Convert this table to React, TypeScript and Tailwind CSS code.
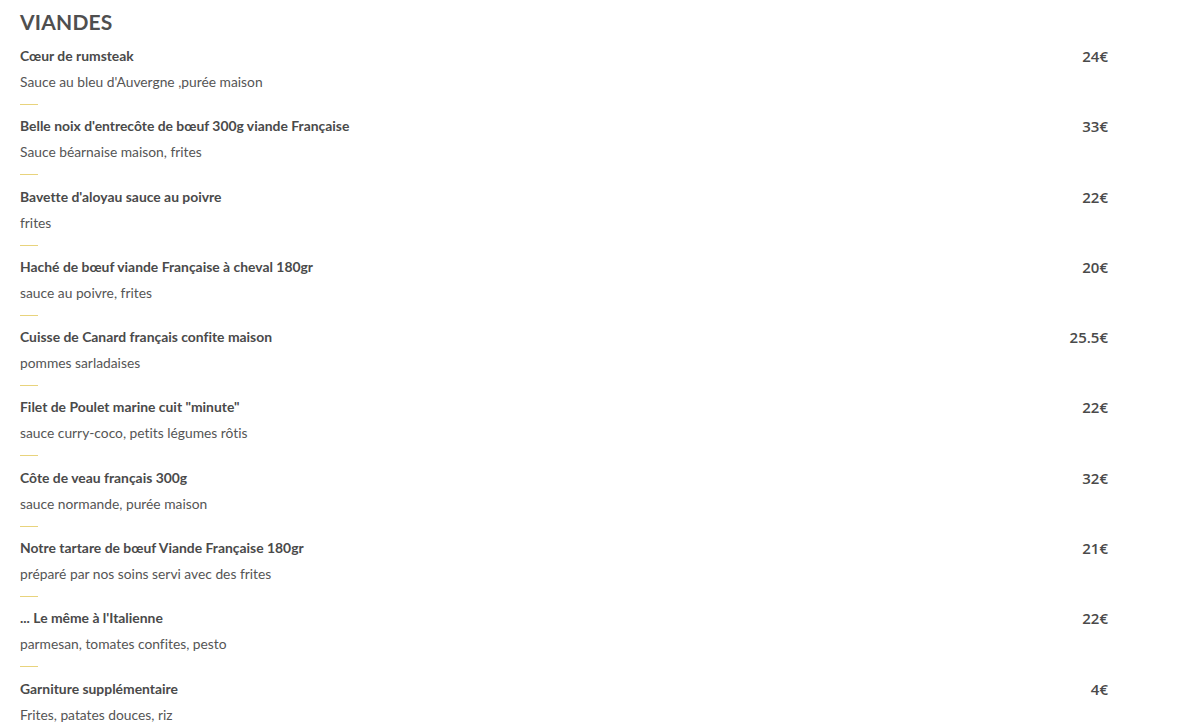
import React from "react"

interface Dish {
    name: string
    desc: string
    price: string
}

const dishes: Dish[] = [
    { name: "Cœur de rumsteak", desc: "Sauce au bleu d'Auvergne ,purée maison", price: "24€" },
    { name: "Belle noix d'entrecôte de bœuf 300g viande Française", desc: "Sauce béarnaise maison, frites", price: "33€" },
    { name: "Bavette d'aloyau sauce au poivre", desc: "frites", price: "22€" },
    { name: "Haché de bœuf viande Française à cheval 180gr", desc: "sauce au poivre, frites", price: "20€" },
    { name: "Cuisse de Canard français confite maison", desc: "pommes sarladaises", price: "25.5€" },
    { name: "Filet de Poulet marine cuit \"minute\"", desc: "sauce curry-coco, petits légumes rôtis", price: "22€" },
    { name: "Côte de veau français 300g", desc: "sauce normande, purée maison", price: "32€" },
    { name: "Notre tartare de bœuf Viande Française 180gr", desc: "préparé par nos soins servi avec des frites", price: "21€" },
    { name: "... Le même à l'Italienne", desc: "parmesan, tomates confites, pesto", price: "22€" },
    { name: "Garniture supplémentaire", desc: "Frites, patates douces, riz", price: "4€" },
]

const MenuItem: React.FunctionComponent<{ dish: Dish; last: boolean }> = ({ dish, last }) => {
    return (
        <div className="flex flex-col">
            <div className="flex flex-row justify-between items-center h-[20px]">
                <span className="text-[13.9px] leading-[20px] font-bold text-[#4a4a4a]">{dish.name}</span>
                <span className="text-[15px] leading-[20px] font-semibold text-[#4a4a4a] font-['Open_Sans',sans-serif]">{dish.price}</span>
            </div>
            <div className="mt-[6px] text-[13.8px] leading-[20px] text-[#555555]">{dish.desc}</div>
            {!last && (
                <div className="mt-[12px] mb-[11.3px]">
                    <div className="w-[18px] h-px bg-[#e8d37c]" />
                </div>
            )}
        </div>
    )
}

export default function App() {
    return (
        <div className="min-h-screen bg-white font-['Lato',sans-serif] [font-variant-ligatures:none]">
            <div className="pl-[20px] w-[1108px] pt-[9px]">
                <h2 className="text-[21px] leading-[26px] font-bold tracking-[0.2px] text-[#4f4f4f]">VIANDES</h2>
                <div className="mt-[11px] flex flex-col">
                    {dishes.map((dish, index) => (
                        <MenuItem key={index} dish={dish} last={index === dishes.length - 1} />
                    ))}
                </div>
            </div>
        </div>
    )
}
